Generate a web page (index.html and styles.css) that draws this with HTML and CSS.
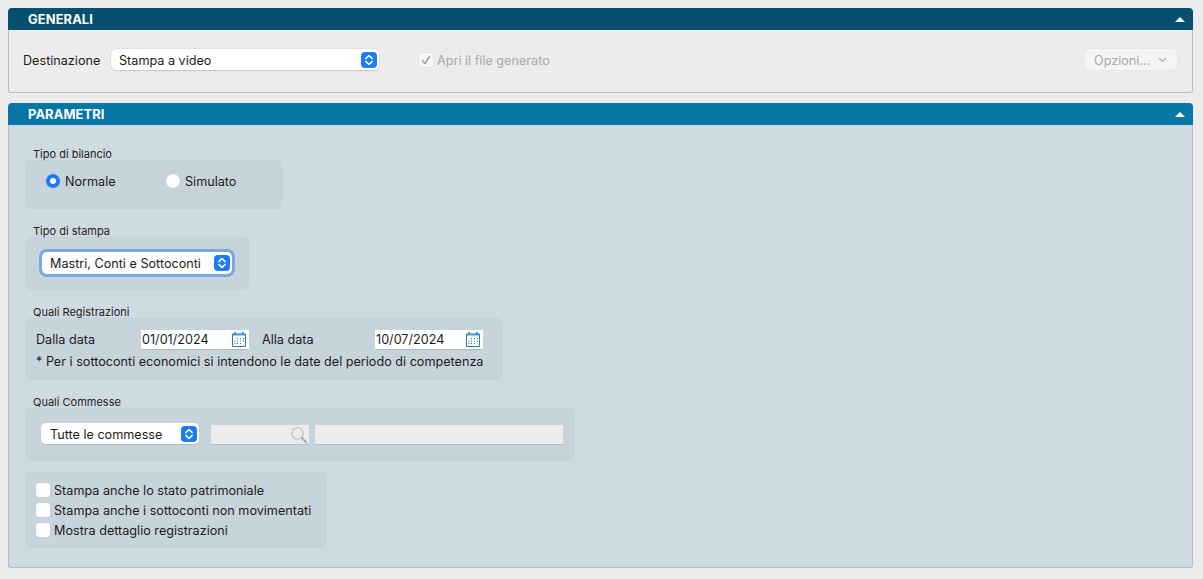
FILE: index.html
```html
<!DOCTYPE html>
<html lang="it">
<head>
<meta charset="utf-8">
<title>Bilancio</title>
<link rel="stylesheet" href="styles.css">
</head>
<body>
<svg class="defs" width="0" height="0" aria-hidden="true">
  <symbol id="stepper" viewBox="0 0 16 16">
    <rect width="16" height="16" rx="4" fill="#1a7cf8"/>
    <path d="M4.800 6.600 8 3.500l3.200 3.100M4.800 9.400 8 12.500l3.200-3.100" fill="none" stroke="#fff" stroke-width="1.500" stroke-linecap="round" stroke-linejoin="round"/>
  </symbol>
  <symbol id="calendar" viewBox="0 0 16 17">
    <path d="M1.500 3h13v12.500h-13z" fill="none" stroke="#1f7db5" stroke-width="1"/>
    <path d="M1 2.500h14V5H1z" fill="#1f7db5" opacity=".4"/>
    <path d="M4 .8v3M12 .8v3" stroke="#1f7db5" stroke-width="1.200"/>
    <path d="M6 7.500h1M9 7.500h1M12 7.500h1M3.500 10h1M6 10h1M9 10h1M12 10h1M3.500 12.500h1M6 12.500h1M9 12.500h1" stroke="#1f7db5" stroke-width="1.200"/>
  </symbol>
</svg>

<section class="panel panel-general">
  <header class="panel-head head-dark">
    <h2>GENERALI</h2>
    <span class="collapse"></span>
  </header>
  <div class="panel-body general-row">
    <span class="dest-label">Destinazione</span>
    <div class="select select-dest">
      <span>Stampa a video</span>
      <svg class="stepper"><use href="#stepper"/></svg>
    </div>
    <label class="check-disabled">
      <span class="checkbox is-disabled">
        <svg viewBox="0 0 14 14" width="14" height="14"><path d="M3.500 7.500 6 10.500 10.500 3.500" fill="none" stroke="#a6a6a6" stroke-width="1.700" stroke-linecap="round" stroke-linejoin="round"/></svg>
      </span>
      Apri il file generato
    </label>
    <div class="btn-options">
      <span>Opzioni...</span>
      <svg viewBox="0 0 10 6" width="9" height="6"><path d="M1.500 1.200 5 4.500l3.500-3.300" fill="none" stroke="#a8a8a8" stroke-width="1.400" stroke-linecap="round" stroke-linejoin="round"/></svg>
    </div>
  </div>
</section>

<section class="panel panel-params">
  <header class="panel-head head-blue">
    <h2>PARAMETRI</h2>
    <span class="collapse"></span>
  </header>
  <div class="panel-body params-body">

    <div class="field">
      <div class="caption">Tipo di bilancio</div>
      <div class="group group-balance">
        <label class="radio-item item-normal"><span class="radio is-on"></span>Normale</label>
        <label class="radio-item"><span class="radio"></span>Simulato</label>
      </div>
    </div>

    <div class="field">
      <div class="caption">Tipo di stampa</div>
      <div class="group group-print">
        <div class="select select-print is-focus">
          <span>Mastri, Conti e Sottoconti</span>
          <svg class="stepper"><use href="#stepper"/></svg>
        </div>
      </div>
    </div>

    <div class="field">
      <div class="caption">Quali Registrazioni</div>
      <div class="group group-reg">
        <div class="date-row">
          <span class="date-label label-from">Dalla data</span>
          <div class="date-input">
            <span>01/01/2024</span>
            <svg class="cal"><use href="#calendar"/></svg>
          </div>
          <span class="date-label label-to">Alla data</span>
          <div class="date-input">
            <span>10/07/2024</span>
            <svg class="cal"><use href="#calendar"/></svg>
          </div>
        </div>
        <div class="note">* Per i sottoconti economici si intendono le date del periodo di competenza</div>
      </div>
    </div>

    <div class="field">
      <div class="caption">Quali Commesse</div>
      <div class="group group-comm">
        <div class="select select-comm">
          <span>Tutte le commesse</span>
          <svg class="stepper"><use href="#stepper"/></svg>
        </div>
        <div class="input-off search-off">
          <svg viewBox="0 0 18 18" width="18" height="18"><circle cx="7.500" cy="7.500" r="5.700" fill="none" stroke="#bdbdbd" stroke-width="1.100"/><path d="m11.800 11.800 4.400 4.400" stroke="#a4a4a4" stroke-width="1.800" stroke-linecap="round"/></svg>
        </div>
        <div class="input-off wide-off"></div>
      </div>
    </div>

    <div class="group group-checks">
      <label class="check-item"><span class="checkbox"></span>Stampa anche lo stato patrimoniale</label>
      <label class="check-item"><span class="checkbox"></span>Stampa anche i sottoconti non movimentati</label>
      <label class="check-item"><span class="checkbox"></span>Mostra dettaglio registrazioni</label>
    </div>

  </div>
</section>
</body>
</html>
```
FILE: styles.css
```css
* { box-sizing: border-box; }
html, body { height: 100%; overflow: hidden; }
body {
  margin: 0;
  padding: 8px 10px 0 8px;
  background: #ececec;
  font-family: Inter, "Liberation Sans", sans-serif;
  font-size: 12.640px;
  color: #1c1c1c;
}
.defs { position: absolute; }

.panel { border-radius: 4px; }
.panel-params { margin-top: 10px; }
.panel-head {
  height: 22px;
  border-radius: 4px 4px 0 0;
  display: flex;
  align-items: center;
  justify-content: space-between;
  padding: 0 8px 0 20px;
  color: #fff;
}
.panel-head h2 { margin: 0; font-size: 12.900px; font-weight: 700; letter-spacing: .1px; }
.head-dark { background: #04506e; }
.head-blue { background: #0677a6; }
.collapse {
  width: 0;
  height: 0;
  border-left: 5px solid transparent;
  border-right: 5px solid transparent;
  border-bottom: 5px solid #fff;
}
.panel-body {
  border: 1px solid #bdbdbd;
  border-top: 0;
  border-radius: 0 0 3px 3px;
}

.general-row {
  height: 63px;
  background: #ececec;
  display: flex;
  align-items: center;
  padding: 0 15px 3px 14px;
}
.dest-label { width: 88px; padding-top: 1px; }
.select {
  display: flex;
  align-items: center;
  justify-content: space-between;
  height: 21px;
  padding: 0 2px 0 8px;
  background: #fff;
  border-radius: 5px;
  box-shadow: 0 0 0 .5px #d2d2d2, 0 1px 1px rgba(0,0,0,.2);
  flex: none;
}
.select span { padding-top: 1px; }
.stepper { width: 16px; height: 16px; flex: none; }
.select-dest { width: 268px; }
.check-disabled {
  display: flex;
  align-items: center;
  gap: 4px;
  margin-left: 40px;
  padding-top: 1px;
  color: #a9a9a9;
}
.btn-options {
  margin-left: auto;
  width: 92px;
  height: 21px;
  background: #f5f5f5;
  border-radius: 5px;
  box-shadow: 0 0 0 .5px #e2e2e2;
  color: #a9a9a9;
  display: flex;
  align-items: center;
  justify-content: space-between;
  padding: 1px 10px 0 9px;
}

.checkbox {
  width: 14px;
  height: 14px;
  flex: none;
  background: #fff;
  border-radius: 3px;
  box-shadow: 0 0 0 .5px #c4cdd2;
  display: block;
}
.checkbox.is-disabled { background: #f6f6f6; box-shadow: 0 0 0 .5px #d8d8d8; }

.params-body {
  height: 443px;
  background: #cfdbe2;
  padding: 21px 0 0 17px;
  border-color: #b3bdc3;
}
.field { margin-bottom: 14px; }
.caption { height: 14px; font-size: 11px; line-height: 17px; padding-left: 7px; color: #222; }
.group {
  background: #c7d4db;
  border-radius: 6px;
  box-shadow: inset 0 0 0 .5px #c2cfd6;
}
.group-balance {
  width: 256px;
  height: 49px;
  display: flex;
  align-items: flex-start;
  padding: 14px 0 0 20px;
}
.radio-item { display: flex; align-items: center; gap: 5px; height: 14px; }
.item-normal { width: 120px; }
.radio {
  width: 14px;
  height: 14px;
  border-radius: 50%;
  background: #fff;
  box-shadow: 0 0 0 .5px #c0c9ce;
  flex: none;
}
.radio.is-on { background: #fff; border: 4px solid #1a7cf8; box-shadow: none; }

.group-print { width: 223px; height: 53px; padding: 15px 0 0 16px; }
.select-print { width: 190px; height: 22px; }
.is-focus { box-shadow: 0 0 0 3px #7da8df; }

.group-reg { width: 476px; height: 62px; padding: 12px 0 0 10px; }
.date-row { display: flex; align-items: center; }
.date-label { flex: none; }
.label-from { width: 105px; }
.label-to { width: 126px; padding-left: 13px; }
.date-input {
  width: 108px;
  height: 19px;
  background: #fff;
  padding: 0 2px 0 1px;
  display: flex;
  align-items: center;
  justify-content: space-between;
  box-shadow: 0 1px 0 rgba(0,0,0,.12);
  flex: none;
}
.cal { width: 16px; height: 17px; flex: none; }
.note { margin-top: 3px; line-height: 20px; }

.group-comm {
  width: 548px;
  height: 53px;
  display: flex;
  align-items: flex-start;
  padding: 15px 0 0 15px;
}
.select-comm { width: 158px; padding-left: 9px; }
.input-off { height: 19px; margin-top: 2px; background: #ececec; box-shadow: 0 1px 0 rgba(0,0,0,.1); }
.search-off {
  width: 98px;
  margin-left: 12px;
  display: flex;
  align-items: center;
  justify-content: flex-end;
  padding-right: 1px;
}
.wide-off { width: 248px; margin-left: 6px; }

.group-checks { width: 300px; height: 76px; margin-top: -3px; padding: 8px 0 0 10px; }
.check-item { display: flex; align-items: center; gap: 4px; height: 20px; }
```
